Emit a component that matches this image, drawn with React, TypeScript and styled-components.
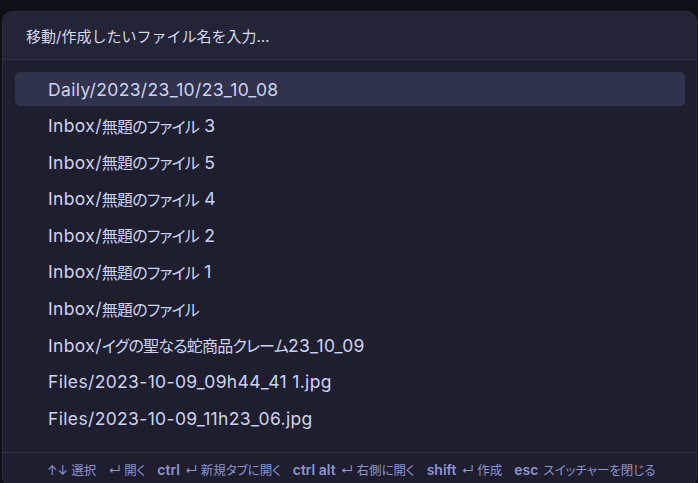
import React from "react";
import styled, { createGlobalStyle } from "styled-components";

const Global = createGlobalStyle`
  html, body { margin: 0; padding: 0; background: #0f0f16; }
  body { font-family: Inter, "Noto Sans CJK JP", sans-serif; overflow: hidden; }
`;

const Page = styled.div`
  width: 698px;
  height: 483px;
  padding: 11px 1px 0 2px;
  box-sizing: border-box;
  overflow: hidden;
`;

const Modal = styled.div`
  height: 474px;
  background: #1e1e2e;
  border: 1px solid #2c2d42;
  border-radius: 10px;
  display: flex;
  flex-direction: column;
  overflow: hidden;
`;

const Header = styled.div`
  height: 47px;
  background: #232437;
  border-bottom: 1px solid #2d2e45;
  display: flex;
  align-items: center;
  padding-left: 23px;
  font-size: 15px;
  color: #d6d8ee;
`;

const List = styled.div`
  padding: 12px 11px 0 12px;
  display: flex;
  flex-direction: column;
  flex: 1;
`;

const Row = styled.div<{ $active?: boolean }>`
  height: 34px;
  margin-bottom: 2.6px;
  border-radius: 5px;
  display: flex;
  align-items: center;
  padding-left: 33px;
  font-size: 17.5px;
  letter-spacing: 0.35px;
  white-space: pre;
  color: #cdd3f0;
  background: ${(p) => (p.$active ? "#31324c" : "transparent")};
`;

const Jp = styled.span`
  font-family: "Noto Sans CJK JP", sans-serif;
  font-size: 16px;
  letter-spacing: -0.8px;
  font-feature-settings: "palt";
`;

const Footer = styled.div`
  height: 33px;
  border-top: 1px solid #34354c;
  display: flex;
  align-items: center;
  padding-left: 44px;
  gap: 12px;
  font-size: 12.5px;
  font-feature-settings: "palt";
  color: #8e93d2;
`;

const Hint = styled.span`
  display: inline-flex;
  align-items: baseline;
  gap: 5px;
  white-space: nowrap;
`;

const Key = styled.b`
  font-weight: 600;
  font-size: 14px;
`;

const items = [
  "Daily/2023/23_10/23_10_08",
  "Inbox/無題のファイル 3",
  "Inbox/無題のファイル 5",
  "Inbox/無題のファイル 4",
  "Inbox/無題のファイル 2",
  "Inbox/無題のファイル 1",
  "Inbox/無題のファイル",
  "Inbox/イグの聖なる蛇商品クレーム23_10_09",
  "Files/2023-10-09_09h44_41 1.jpg",
  "Files/2023-10-09_11h23_06.jpg",
];

const hints: [string, string][] = [
  ["", "↑↓ 選択"],
  ["", "↵ 開く"],
  ["ctrl", "↵ 新規タブに開く"],
  ["ctrl alt", "↵ 右側に開く"],
  ["shift", "↵ 作成"],
  ["esc", "スイッチャーを閉じる"],
];

const splitRuns = (s: string) =>
  s.split(/([\u3000-\u30ff\u4e00-\u9fff]+)/).filter(Boolean);
const isCjk = (s: string) => /[\u3000-\u30ff\u4e00-\u9fff]/.test(s);

export default function App() {
  return (
    <Page>
      <Global />
      <Modal>
        <Header>移動/作成したいファイル名を入力…</Header>
        <List>
          {items.map((t, i) => (
            <Row key={t} $active={i === 0}>
              {splitRuns(t).map((r, j) =>
                isCjk(r) ? <Jp key={j}>{r}</Jp> : <span key={j}>{r}</span>
              )}
            </Row>
          ))}
        </List>
        <Footer>
          {hints.map(([k, d]) => (
            <Hint key={k + d}>
              {k && <Key>{k}</Key>}
              <span>{d}</span>
            </Hint>
          ))}
        </Footer>
      </Modal>
    </Page>
  );
}
